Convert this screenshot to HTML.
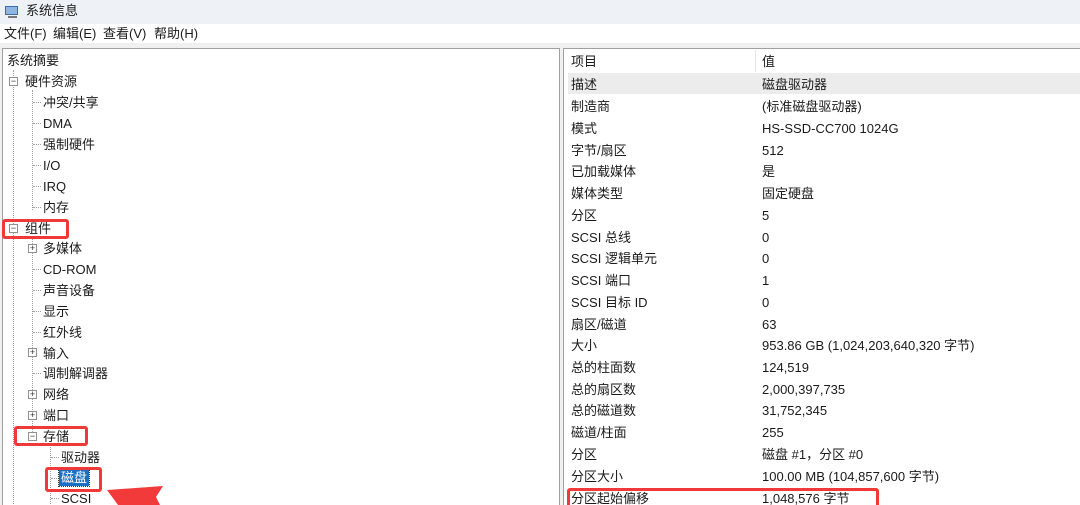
<!DOCTYPE html>
<html><head><meta charset="utf-8"><style>
*{margin:0;padding:0;box-sizing:border-box}
html,body{width:1080px;height:505px;overflow:hidden}
body{background:#f0f0f0;font-family:"Liberation Sans","Noto Sans CJK SC",sans-serif;font-size:13px;color:#1a1a1a;position:relative}
.a{position:absolute;white-space:nowrap}
#title{left:0;top:0;width:1080px;height:24px;background:#eef2f7}
#menu{left:0;top:24px;width:1080px;height:19px;background:#fff}
#lp{left:2px;top:48px;width:558px;height:460px;background:#fff;border:1px solid #a0a0a0}
#rp{left:563px;top:48px;width:520px;height:460px;background:#fff;border:1px solid #a0a0a0}
.t{line-height:16px}
.box{position:absolute;width:9px;height:9px;border:1px solid #919191;background:#fff;font-size:9px;line-height:7px;text-align:center;color:#333}
.vl{position:absolute;border-left:1px dotted #a0a0a0;width:0}
.hl{position:absolute;border-top:1px dotted #a0a0a0;height:0;width:8px}
.red{position:absolute;border:3px solid #f03a3a;border-radius:3px}
</style></head><body>
<div class="a" id="title"></div>
<svg class="a" style="left:4px;top:4px" width="16" height="16"><rect x="1" y="2" width="13" height="9" fill="#3a6ea8"/><rect x="2" y="3" width="11" height="7" fill="#8fb6e0"/><rect x="4" y="12" width="9" height="2" fill="#777"/></svg>
<div class="a t" style="left:26px;top:3px">系统信息</div>
<div class="a" id="menu"></div>
<div class="a t" style="left:4px;top:26px">文件(F)</div>
<div class="a t" style="left:53px;top:26px">编辑(E)</div>
<div class="a t" style="left:103px;top:26px">查看(V)</div>
<div class="a t" style="left:154px;top:26px">帮助(H)</div>
<div class="a" id="lp"></div>
<div class="a" id="rp"></div>

<div class="vl" style="left:13px;top:70px;height:440px"></div>
<div class="vl" style="left:32px;top:90px;height:120px"></div>
<div class="vl" style="left:32px;top:236px;height:200px"></div>
<div class="vl" style="left:50px;top:444px;height:70px"></div>
<div class="hl" style="left:33px;top:102px"></div>
<div class="hl" style="left:33px;top:123px"></div>
<div class="hl" style="left:33px;top:144px"></div>
<div class="hl" style="left:33px;top:165px"></div>
<div class="hl" style="left:33px;top:186px"></div>
<div class="hl" style="left:33px;top:207px"></div>
<div class="hl" style="left:33px;top:269px"></div>
<div class="hl" style="left:33px;top:290px"></div>
<div class="hl" style="left:33px;top:311px"></div>
<div class="hl" style="left:33px;top:332px"></div>
<div class="hl" style="left:33px;top:373px"></div>
<div class="hl" style="left:51px;top:457px"></div>
<div class="hl" style="left:51px;top:478px"></div>
<div class="hl" style="left:51px;top:498px"></div>

<div class="a t" style="left:7px;top:53px">系统摘要</div>
<div class="box" style="left:9px;top:77px">−</div><div class="a t" style="left:25px;top:74px">硬件资源</div>
<div class="a t" style="left:43px;top:95px">冲突/共享</div>
<div class="a t" style="left:43px;top:116px">DMA</div>
<div class="a t" style="left:43px;top:137px">强制硬件</div>
<div class="a t" style="left:43px;top:158px">I/O</div>
<div class="a t" style="left:43px;top:179px">IRQ</div>
<div class="a t" style="left:43px;top:200px">内存</div>
<div class="box" style="left:9px;top:224px">−</div><div class="a t" style="left:25px;top:221px">组件</div>
<div class="box" style="left:28px;top:244px">+</div><div class="a t" style="left:43px;top:241px">多媒体</div>
<div class="a t" style="left:43px;top:262px">CD-ROM</div>
<div class="a t" style="left:43px;top:283px">声音设备</div>
<div class="a t" style="left:43px;top:304px">显示</div>
<div class="a t" style="left:43px;top:325px">红外线</div>
<div class="box" style="left:28px;top:348px">+</div><div class="a t" style="left:43px;top:346px">输入</div>
<div class="a t" style="left:43px;top:366px">调制解调器</div>
<div class="box" style="left:28px;top:390px">+</div><div class="a t" style="left:43px;top:387px">网络</div>
<div class="box" style="left:28px;top:411px">+</div><div class="a t" style="left:43px;top:408px">端口</div>
<div class="box" style="left:28px;top:432px">−</div><div class="a t" style="left:43px;top:429px">存储</div>
<div class="a t" style="left:61px;top:450px">驱动器</div>
<div class="a t" style="left:59px;top:470px;background:#1c6fc6;color:#fff;padding:0 2px;outline:1px dotted #333">磁盘</div>
<div class="a t" style="left:61px;top:491px">SCSI</div>

<div class="red" style="left:2px;top:219px;width:67px;height:20px"></div>
<div class="red" style="left:14px;top:426px;width:74px;height:20px"></div>
<div class="red" style="left:45px;top:467px;width:57px;height:25px"></div>
<svg class="a" style="left:0;top:0" width="1080" height="505"><polygon points="107,490 163,486 156,497 160,505 118,505" fill="#f23a3a"/></svg>

<div class="a" style="left:568px;top:73px;width:512px;height:21px;background:#ececec"></div>
<div class="a" style="left:755px;top:50px;width:1px;height:22px;background:#e5e5e5"></div>
<div class="a t" style="left:571px;top:54px">项目</div><div class="a t" style="left:762px;top:54px">值</div>
<div class="a t" style="left:571px;top:77px">描述</div><div class="a t" style="left:762px;top:77px">磁盘驱动器</div>
<div class="a t" style="left:571px;top:99px">制造商</div><div class="a t" style="left:762px;top:99px">(标准磁盘驱动器)</div>
<div class="a t" style="left:571px;top:121px">模式</div><div class="a t" style="left:762px;top:121px">HS-SSD-CC700 1024G</div>
<div class="a t" style="left:571px;top:143px">字节/扇区</div><div class="a t" style="left:762px;top:143px">512</div>
<div class="a t" style="left:571px;top:164px">已加载媒体</div><div class="a t" style="left:762px;top:164px">是</div>
<div class="a t" style="left:571px;top:186px">媒体类型</div><div class="a t" style="left:762px;top:186px">固定硬盘</div>
<div class="a t" style="left:571px;top:208px">分区</div><div class="a t" style="left:762px;top:208px">5</div>
<div class="a t" style="left:571px;top:230px">SCSI 总线</div><div class="a t" style="left:762px;top:230px">0</div>
<div class="a t" style="left:571px;top:251px">SCSI 逻辑单元</div><div class="a t" style="left:762px;top:251px">0</div>
<div class="a t" style="left:571px;top:273px">SCSI 端口</div><div class="a t" style="left:762px;top:273px">1</div>
<div class="a t" style="left:571px;top:295px">SCSI 目标 ID</div><div class="a t" style="left:762px;top:295px">0</div>
<div class="a t" style="left:571px;top:317px">扇区/磁道</div><div class="a t" style="left:762px;top:317px">63</div>
<div class="a t" style="left:571px;top:338px">大小</div><div class="a t" style="left:762px;top:338px">953.86 GB (1,024,203,640,320 字节)</div>
<div class="a t" style="left:571px;top:360px">总的柱面数</div><div class="a t" style="left:762px;top:360px">124,519</div>
<div class="a t" style="left:571px;top:382px">总的扇区数</div><div class="a t" style="left:762px;top:382px">2,000,397,735</div>
<div class="a t" style="left:571px;top:403px">总的磁道数</div><div class="a t" style="left:762px;top:403px">31,752,345</div>
<div class="a t" style="left:571px;top:425px">磁道/柱面</div><div class="a t" style="left:762px;top:425px">255</div>
<div class="a t" style="left:571px;top:447px">分区</div><div class="a t" style="left:762px;top:447px">磁盘 #1，分区 #0</div>
<div class="a t" style="left:571px;top:469px">分区大小</div><div class="a t" style="left:762px;top:469px">100.00 MB (104,857,600 字节)</div>
<div class="a t" style="left:571px;top:491px">分区起始偏移</div><div class="a t" style="left:762px;top:491px">1,048,576 字节</div>
<div class="red" style="left:567px;top:488px;width:312px;height:30px"></div>
</body></html>
